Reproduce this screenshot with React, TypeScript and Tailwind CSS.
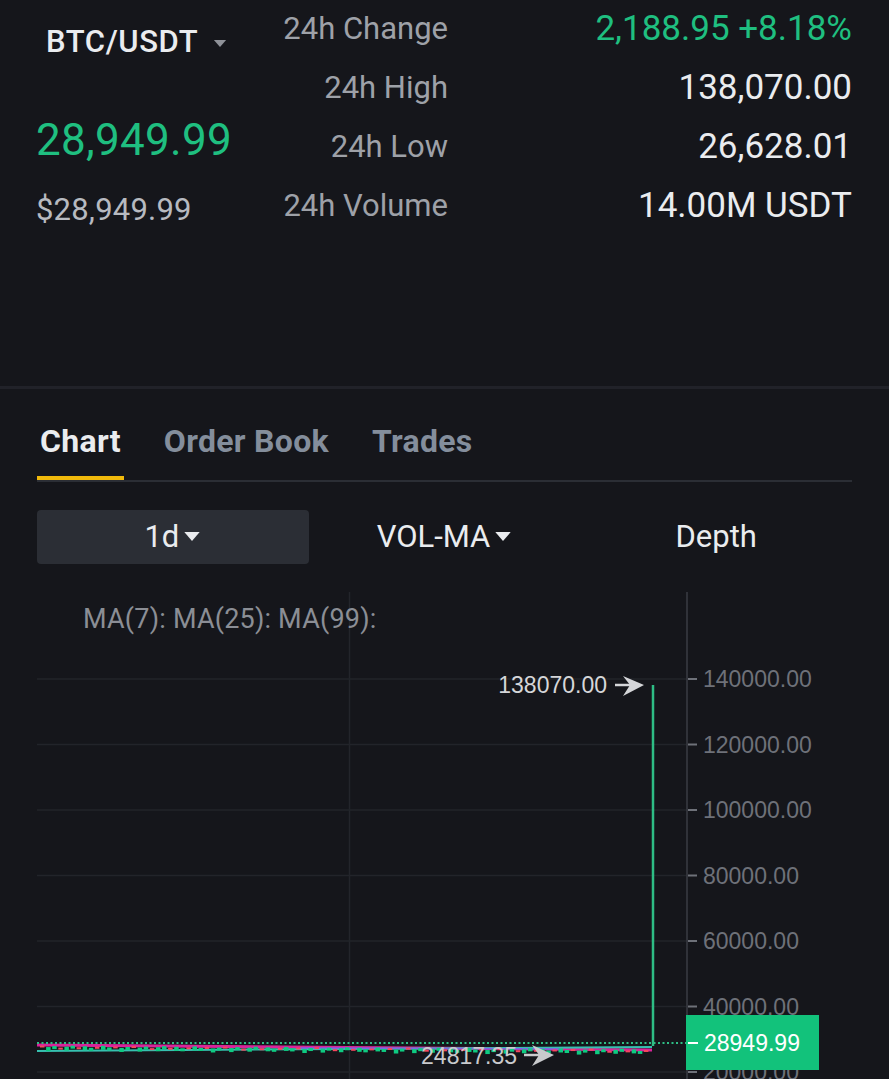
import React from "react"

const ui = "font-['Roboto',sans-serif]"

function Caret({ className }: { className?: string }) {
  return (
    <svg viewBox="0 0 16 10" className={className}>
      <path d="M1 1 L15 1 L8 9 Z" fill="currentColor" />
    </svg>
  )
}

const stats = [
  { label: "24h Change", value: "2,188.95 +8.18%", green: true },
  { label: "24h High", value: "138,070.00" },
  { label: "24h Low", value: "26,628.01" },
  { label: "24h Volume", value: "14.00M USDT" },
]

const axis = [
  { y: 679, t: "140000.00" },
  { y: 744.5, t: "120000.00" },
  { y: 810, t: "100000.00" },
  { y: 875.5, t: "80000.00" },
  { y: 941, t: "60000.00" },
  { y: 1006.5, t: "40000.00" },
  { y: 1072, t: "20000.00" },
]

// little candles squashed at the bottom of the chart
const candles = Array.from({ length: 100 }, (_, i) => {
  const x = 40 + i * 6.1
  const up = (i * 7) % 3 !== 0
  const y = 1045.5 + i * 0.035 + ((i * 13) % 5) * 0.5
  const h = 2 + ((i * 5) % 3)
  return { x, y, h, up }
})

function Chart() {
  return (
    <svg width={889} height={515} viewBox="0 564 889 515" className="block">
      {/* grid */}
      <line x1={349.5} y1={592} x2={349.5} y2={1079} stroke="#23252b" strokeWidth={1.5} />
      {axis.map((a) => (
        <line key={a.t} x1={37} y1={a.y} x2={686} y2={a.y} stroke="#22242a" strokeWidth={1.5} />
      ))}
      <line x1={687} y1={592} x2={687} y2={1079} stroke="#3a3d44" strokeWidth={1.5} />

      {/* axis labels */}
      {axis.map((a) => (
        <g key={a.t + "l"}>
          <line x1={688} y1={a.y} x2={697} y2={a.y} stroke="#6e7179" strokeWidth={2} />
          <text x={703} y={a.y + 8} fill="#6e7179" fontSize={23} fontFamily="'Liberation Sans', Arial, sans-serif">
            {a.t}
          </text>
        </g>
      ))}

      <text x={83} y={628} fill="#8b8e95" fontSize={27} letterSpacing={0.2} fontFamily="Roboto, sans-serif">
        MA(7): MA(25): MA(99):
      </text>

      {/* candles band */}
      <line x1={37} y1={1045} x2={652} y2={1050} stroke="#d8249a" strokeWidth={3} />
      <line x1={37} y1={1051} x2={652} y2={1047} stroke="#36c0b0" strokeWidth={2} />
      <line x1={300} y1={1048} x2={560} y2={1049} stroke="#7d66e8" strokeWidth={1.5} />
      {candles.map((c, i) => (
        <rect key={i} x={c.x} y={c.y} width={4.5} height={c.h} fill={c.up ? "#0ecb81" : "#f6465d"} />
      ))}

      {/* last price dotted line */}
      <line x1={37} y1={1043} x2={686} y2={1043} stroke="#2ebd85" strokeWidth={2} strokeDasharray="2 2.5" />

      {/* spike */}
      <line x1={653} y1={685} x2={653} y2={1046} stroke="#2ebd85" strokeWidth={2.5} />

      {/* high marker */}
      <text x={607} y={693} textAnchor="end" fill="#d5d6d9" fontSize={23} fontFamily="'Liberation Sans', Arial, sans-serif">
        138070.00
      </text>
      <line x1={615} y1={685} x2={638} y2={685} stroke="#d5d6d9" strokeWidth={2.5} />
      <path d="M623 676 L644 685 L623 696 L630 685 Z" fill="#d5d6d9" />

      {/* low marker */}
      <text x={517} y={1064} textAnchor="end" fill="#c9cacd" fontSize={23} fontFamily="'Liberation Sans', Arial, sans-serif">
        24817.35
      </text>
      <line x1={524} y1={1055} x2={547} y2={1055} stroke="#c9cacd" strokeWidth={2.5} />
      <path d="M532 1045 L554 1055 L532 1066 L539 1055 Z" fill="#c9cacd" />

      {/* last price tag */}
      <rect x={686} y={1015} width={133} height={55} fill="#12c27b" />
      <line x1={688} y1={1043} x2={698} y2={1043} stroke="#ffffff" strokeWidth={2} />
      <text x={704} y={1051} fill="#ffffff" fontSize={23} fontFamily="'Liberation Sans', Arial, sans-serif">
        28949.99
      </text>
    </svg>
  )
}

export default function App() {
  return (
    <div className={`w-[889px] h-[1079px] overflow-hidden bg-[#15161b] ${ui}`}>
      {/* ticker header */}
      <div className="flex h-[386px]">
        <div className="flex flex-col pl-[36px]">
          <div className="mt-[24px] ml-[10px] flex items-center gap-[15px] text-[31px] leading-[36px] font-medium tracking-[0.6px] text-[#eaecef]">
            BTC/USDT
            <Caret className="w-[14px] h-[9px] text-[#8f9299] mt-[2px]" />
          </div>
          <div className="mt-[55px] text-[44px] leading-[50px] tracking-[0.3px] text-[#1fbf80]">28,949.99</div>
          <div className="mt-[27px] text-[31px] leading-[36px] tracking-[0.2px] text-[#b7bac0]">$28,949.99</div>
        </div>
        <div className="ml-auto mr-[37px] w-[582px] grid grid-cols-[178px_1fr] auto-rows-[59px]">
          {stats.map((s) => (
            <React.Fragment key={s.label}>
              <div className="flex items-center justify-end text-[31px] text-[#9ea1a8]">{s.label}</div>
              <div
                className={`flex items-center justify-end text-[35px] ${s.green ? "text-[#1fbf80]" : "text-[#eaecef]"}`}
              >
                {s.value}
              </div>
            </React.Fragment>
          ))}
        </div>
      </div>
      <div className="h-[3px] bg-[#212229]" />

      {/* tabs */}
      <div className="mx-[37px] pt-[33px] flex gap-[37px] border-b-2 border-[#2b2e35] text-[32px] leading-[38px] font-bold tracking-[0.3px]">
        <div className="px-[3px] pb-[16px] border-b-4 border-[#f0b90b] text-[#eaecef]">Chart</div>
        <div className="px-[3px] pb-[16px] border-b-4 border-transparent text-[#848e9c]">Order Book</div>
        <div className="px-[3px] pb-[16px] border-b-4 border-transparent text-[#848e9c]">Trades</div>
      </div>

      {/* toolbar */}
      <div className="mx-[37px] mt-[28px] grid grid-cols-3 h-[54px] text-[31px] text-[#eaecef]">
        <div className="flex items-center justify-center gap-[4px] rounded-[4px] bg-[#2b2e35]">
          1d
          <Caret className="w-[18px] h-[11px] mb-[2px]" />
        </div>
        <div className="flex items-center justify-center gap-[4px]">
          VOL-MA
          <Caret className="w-[18px] h-[11px] mb-[2px]" />
        </div>
        <div className="flex items-center justify-center">Depth</div>
      </div>

      <Chart />
    </div>
  )
}
